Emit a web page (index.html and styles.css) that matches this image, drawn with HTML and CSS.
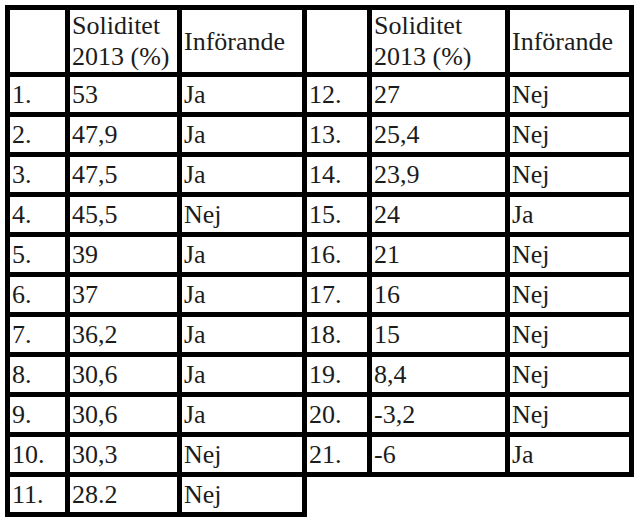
FILE: index.html
```html
<!DOCTYPE html>
<html>
<head>
<meta charset="utf-8">
<link rel="stylesheet" href="styles.css">
</head>
<body>
<div class="sheet">
  <div class="box hd lft"></div><div class="box hd"><p class="a">Soliditet<br>2013 (%)</p></div><div class="box hd"><p class="a">Införande</p></div>
  <div class="box hd"></div><div class="box hd"><p class="a">Soliditet<br>2013 (%)</p></div><div class="box hd"><p class="a">Införande</p></div>

  <div class="box lft"><p class="a">1.</p></div><div class="box"><p class="a">53</p></div><div class="box"><p class="a">Ja</p></div><div class="box"><p class="a">12.</p></div><div class="box"><p class="a">27</p></div><div class="box"><p class="a">Nej</p></div>
  <div class="box lft"><p class="a">2.</p></div><div class="box"><p class="a">47,9</p></div><div class="box"><p class="a">Ja</p></div><div class="box"><p class="a">13.</p></div><div class="box"><p class="a">25,4</p></div><div class="box"><p class="a">Nej</p></div>
  <div class="box lft"><p class="a">3.</p></div><div class="box"><p class="a">47,5</p></div><div class="box"><p class="a">Ja</p></div><div class="box"><p class="a">14.</p></div><div class="box"><p class="a">23,9</p></div><div class="box"><p class="a">Nej</p></div>
  <div class="box lft"><p class="a">4.</p></div><div class="box"><p class="a">45,5</p></div><div class="box"><p class="a">Nej</p></div><div class="box"><p class="a">15.</p></div><div class="box"><p class="a">24</p></div><div class="box"><p class="a">Ja</p></div>
  <div class="box lft"><p class="a">5.</p></div><div class="box"><p class="a">39</p></div><div class="box"><p class="a">Ja</p></div><div class="box"><p class="a">16.</p></div><div class="box"><p class="a">21</p></div><div class="box"><p class="a">Nej</p></div>
  <div class="box lft"><p class="a">6.</p></div><div class="box"><p class="a">37</p></div><div class="box"><p class="a">Ja</p></div><div class="box"><p class="a">17.</p></div><div class="box"><p class="a">16</p></div><div class="box"><p class="a">Nej</p></div>
  <div class="box lft"><p class="a">7.</p></div><div class="box"><p class="a">36,2</p></div><div class="box"><p class="a">Ja</p></div><div class="box"><p class="a">18.</p></div><div class="box"><p class="a">15</p></div><div class="box"><p class="a">Nej</p></div>
  <div class="box lft"><p class="a">8.</p></div><div class="box"><p class="a">30,6</p></div><div class="box"><p class="a">Ja</p></div><div class="box"><p class="a">19.</p></div><div class="box"><p class="a">8,4</p></div><div class="box"><p class="a">Nej</p></div>
  <div class="box lft"><p class="a">9.</p></div><div class="box"><p class="a">30,6</p></div><div class="box"><p class="a">Ja</p></div><div class="box"><p class="a">20.</p></div><div class="box"><p class="a">-3,2</p></div><div class="box"><p class="a">Nej</p></div>
  <div class="box lft"><p class="a">10.</p></div><div class="box"><p class="a">30,3</p></div><div class="box"><p class="a">Nej</p></div><div class="box"><p class="a">21.</p></div><div class="box"><p class="a">-6</p></div><div class="box"><p class="a">Ja</p></div>
  <div class="box lft"><p class="a">11.</p></div><div class="box"><p class="a">28.2</p></div><div class="box"><p class="a">Nej</p></div>
</div>
</body>
</html>
```

FILE: styles.css
```css
body {
  margin: 0;
  padding: 5px 0 0 5px;
  background: #ffffff;
}
p {
  font-size: 26px;
  margin: 0;
}
.a {
  font-family: "Liberation Serif";
  color: #1c1c1c;
}
.hd .a {
  line-height: 31px;
}
.sheet {
  display: grid;
  grid-template-columns: 65px 112px 125px 65px 138px 124px;
  grid-template-rows: 72px repeat(11, 40px);
}
.box {
  box-sizing: border-box;
  display: flex;
  align-items: center;
  padding: 0 2px;
  border-right: 5px solid #000;
  border-bottom: 5px solid #000;
}
.box.lft {
  border-left: 5px solid #000;
}
.box.hd {
  border-top: 5px solid #000;
}
```
